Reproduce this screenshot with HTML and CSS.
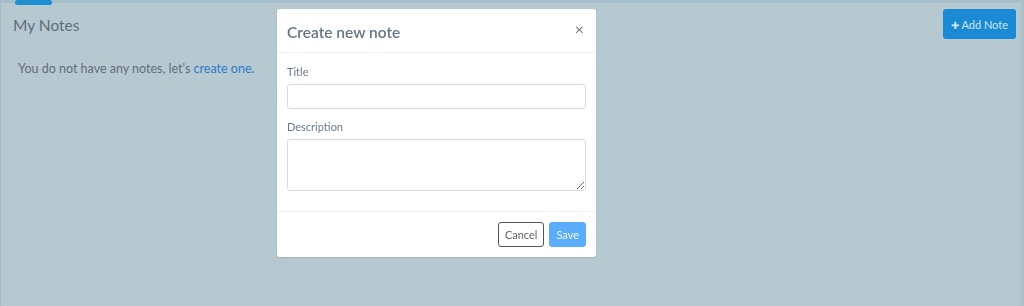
FILE: index.html
```html
<!DOCTYPE html>
<html lang="en">
<head>
  <meta charset="UTF-8" />
  <meta name="viewport" content="width=device-width, initial-scale=1.0"/>
  <title>My Notes</title>
  <link rel="stylesheet" href="styles.css">
</head>
<body>
  <div class="app">
    <div class="topbar">
      <div class="tab-indicator"></div>
    </div>
    <div class="content">
      <div class="page-header">
        <h1>My Notes</h1>
        <button class="btn-add"><span class="plus">&#10010;</span> Add Note</button>
      </div>
      <p class="empty">You do not have any notes, let's <a href="#">create one</a>.</p>
    </div>
  </div>

  <!-- modal tạo ghi chú -->
  <div class="modal">
    <div class="modal-header">
      <h2>Create new note</h2>
      <span class="close">&times;</span>
    </div>
    <div class="modal-body">
      <div class="input-group">
        <label for="title">Title</label>
        <input type="text" id="title" />
      </div>
      <div class="input-group">
        <label for="desc">Description</label>
        <textarea id="desc"></textarea>
      </div>
    </div>
    <div class="modal-footer">
      <button class="btn-cancel">Cancel</button>
      <button class="btn-save">Save</button>
    </div>
  </div>
</body>
</html>
```

FILE: styles.css
```css
* {
  box-sizing: border-box;
  margin: 0;
  padding: 0;
  font-family: "Lato", "Open Sans", sans-serif;
}

body, html {
  height: 100%;
  width: 100%;
  overflow: hidden;
  background: #b7c9d0;
}

.app {
  height: 100vh;
  border-left: 1px solid #a6bcc7;
  border-right: 3px solid #a9bfca;
}

.topbar {
  height: 3px;
  background: #a7bfcb;
  padding-left: 14px;
}

.tab-indicator {
  width: 37px;
  height: 5px;
  border-radius: 3px;
  background: #1b8fcf;
}

.content {
  padding: 6px 5px 0 12px;
}

.page-header {
  display: flex;
  justify-content: space-between;
  align-items: flex-start;
}

.page-header h1 {
  font-size: 15.5px;
  font-weight: normal;
  color: #5f6e7c;
  margin-top: 7px;
}

.btn-add {
  background: #1b8ad5;
  color: #cfe4f2;
  border: none;
  border-radius: 3px;
  font-size: 11px;
  padding: 0 8px;
  height: 30px;
  cursor: pointer;
}

.plus {
  font-size: 10px;
}

.empty {
  margin: 22px 0 0 5px;
  font-size: 12.5px;
  color: #5f6e7c;
}

.empty a {
  color: #2a79cc;
  text-decoration: none;
}

/* modal */
.modal {
  position: fixed;
  top: 9px;
  left: 277px;
  width: 319px;
  background: #fff;
  border-radius: 3px;
  box-shadow: 0 1px 2px rgba(0, 0, 0, 0.12);
}

.modal-header {
  display: flex;
  justify-content: space-between;
  align-items: center;
  height: 44px;
  padding: 0 12px 0 10px;
  border-bottom: 1px solid #eef0f2;
}

.modal-header h2 {
  font-size: 15.5px;
  font-weight: 600;
  color: #66768a;
  margin-top: 2px;
}

.close {
  font-size: 16px;
  color: #777;
  cursor: pointer;
  margin-top: -4px;
}

.modal-body {
  padding: 12px 10px 20px;
  border-bottom: 1px solid #eef0f2;
}

.input-group {
  margin-bottom: 11px;
}

.input-group:last-child {
  margin-bottom: 0;
}

.input-group label {
  display: block;
  font-size: 11px;
  color: #6c7b8c;
  margin-bottom: 6px;
}

.input-group input,
.input-group textarea {
  display: block;
  width: 100%;
  border: 1px solid #d8dde2;
  border-radius: 3px;
}

.input-group input {
  height: 25px;
}

.input-group textarea {
  height: 52px;
  resize: vertical;
}

.modal-footer {
  display: flex;
  justify-content: flex-end;
  gap: 5px;
  padding: 10px 10px 10px;
}

.modal-footer button {
  height: 25px;
  font-size: 11px;
  border-radius: 3px;
  cursor: pointer;
}

.btn-cancel {
  background: #fff;
  border: 1px solid #555;
  color: #666;
  padding: 0 6px;
}

.btn-save {
  background: #5aacfc;
  border: 1px solid #5aacfc;
  color: #eef6ff;
  padding: 0 6px;
}
```
